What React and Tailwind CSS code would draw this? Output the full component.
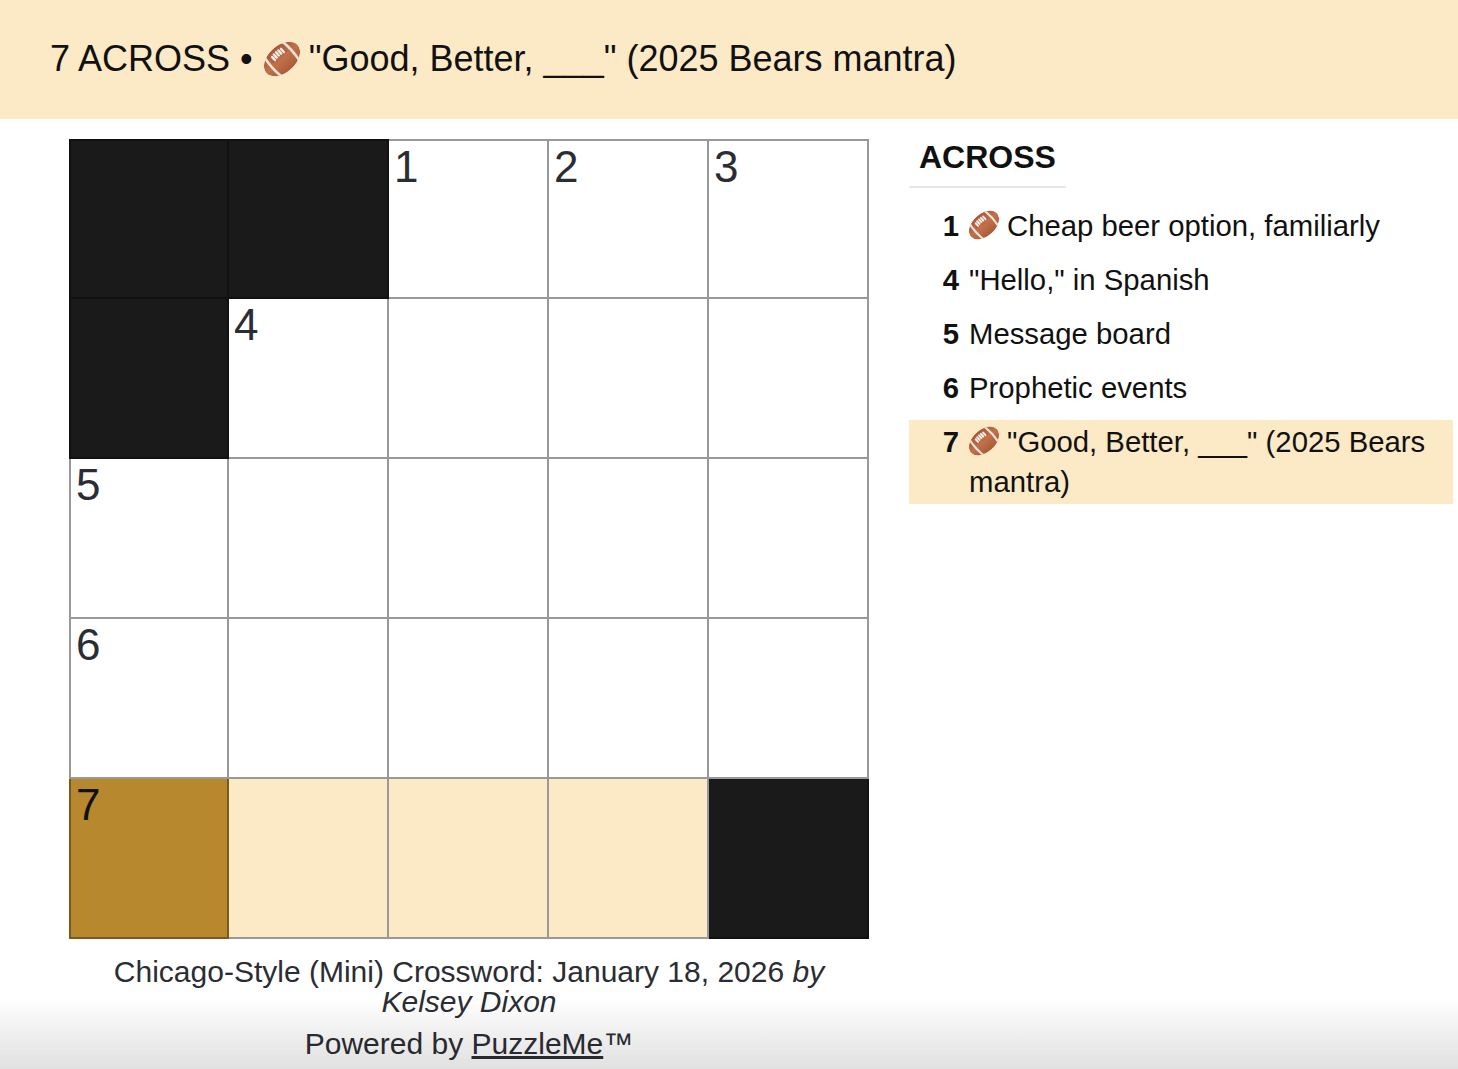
const font = { fontFamily: '"Liberation Sans", Arial, sans-serif' };

const cells = [
  { black: true }, { black: true }, { num: 1 }, { num: 2 }, { num: 3 },
  { black: true }, { num: 4 }, {}, {}, {},
  { num: 5 }, {}, {}, {}, {},
  { num: 6 }, {}, {}, {}, {},
  { num: 7, selected: true }, { active: true }, { active: true }, { active: true }, { black: true },
];

const clues = [
  { num: 1, ball: true, text: "Cheap beer option, familiarly" },
  { num: 4, text: '"Hello," in Spanish' },
  { num: 5, text: "Message board" },
  { num: 6, text: "Prophetic events" },
  { num: 7, ball: true, text: '"Good, Better, ___" (2025 Bears mantra)', active: true },
];

function Football({ className }) {
  return (
    <svg viewBox="0 0 36 36" className={className}>
      <defs>
        <linearGradient id="ball-fill" x1="0" y1="0" x2="0" y2="1">
          <stop offset="0" stopColor="#a8583a" />
          <stop offset="0.5" stopColor="#c0714a" />
          <stop offset="1" stopColor="#a95c38" />
        </linearGradient>
        <clipPath id="ball-clip">
          <ellipse cx="18" cy="18" rx="21" ry="13.5" />
        </clipPath>
      </defs>
      <g transform="rotate(-42 18 18)" clipPath="url(#ball-clip)">
        <ellipse cx="18" cy="18" rx="21" ry="13.5" fill="url(#ball-fill)" />
        <path d="M6.5 3Q3.5 18 6.5 33" stroke="#eee3da" strokeWidth="2.6" fill="none" />
        <path d="M29.5 3Q32.5 18 29.5 33" stroke="#eee3da" strokeWidth="2.6" fill="none" />
        <path d="M9 14.5Q18 10.5 27 14.5" stroke="#8a4a2e" strokeWidth="0.8" fill="none" />
        <path
          d="M12 9.8V14M15 9.2V13.4M18 9V13.2M21 9.2V13.4M24 9.8V14"
          stroke="#f5eee8"
          strokeWidth="2.4"
          strokeLinecap="round"
        />
      </g>
    </svg>
  );
}

function Cell({ cell, index }) {
  let color = "bg-white border-[#999999]";
  if (cell.black) color = "bg-[#1a1a1a] border-[#111111]";
  if (cell.active) color = "bg-[#fce9c6] border-[#999999]";
  if (cell.selected) color = "bg-[#b8882f] border-[#7a5a1a]";
  return (
    <div
      className={`h-40 w-40 border-r-2 border-b-2 ${index % 5 === 0 ? "border-l-2" : ""} ${index < 5 ? "border-t-2" : ""} ${color}`}
    >
      {cell.num && (
        <div className={`pl-[5px] text-[44px] leading-[52px] ${cell.selected ? "text-[#111111]" : "text-[#2a2d33]"}`}>
          {cell.num}
        </div>
      )}
    </div>
  );
}

export default function App() {
  return (
    <div className="relative h-[1069px] overflow-hidden bg-white text-[#111111]" style={font}>
      <header className="flex h-[119px] items-center bg-[#fce9c6] pb-px pl-[50px] text-[36px]">
        <span>7 ACROSS •</span>
        <Football className="mr-[9px] ml-[11px] h-9 w-9" />
        <span>"Good, Better, ___" (2025 Bears mantra)</span>
      </header>

      <div className="flex pt-5">
        <div className="ml-[69px] w-[800px]">
          <div className="grid grid-cols-[repeat(5,160px)]">
            {cells.map((cell, i) => (
              <Cell key={i} cell={cell} index={i} />
            ))}
          </div>
          <div className="mt-[18px] text-center text-[30px] leading-[30px] text-[#2a2d33]">
            <p>
              Chicago-Style (Mini) Crossword: January 18, 2026 <em>by Kelsey Dixon</em>
            </p>
            <p className="mt-3">
              Powered by <a className="underline">PuzzleMe</a>™
            </p>
          </div>
        </div>

        <aside className="ml-10 w-[544px]">
          <h2 className="inline-block border-b-2 border-[#e8e8e3] px-[10px] pb-[10px] text-[32px] leading-[37px] font-bold">
            ACROSS
          </h2>
          <ul className="mt-4 text-[29.3px] leading-[40px]">
            {clues.map((clue) => (
              <li key={clue.num} className={`mb-[10px] flex py-[2px] pr-5 ${clue.active ? "bg-[#fce9c6]" : ""}`}>
                <span className="w-[50px] shrink-0 text-right font-bold">{clue.num}</span>
                <span className="ml-[10px]">
                  {clue.ball && <Football className="mr-2 inline-block h-[30px] w-[30px] align-[-4px]" />}
                  {clue.text}
                </span>
              </li>
            ))}
          </ul>
        </aside>
      </div>

      <div className="pointer-events-none absolute inset-x-0 bottom-0 h-[72px] bg-gradient-to-b from-transparent to-black/12" />
    </div>
  );
}
